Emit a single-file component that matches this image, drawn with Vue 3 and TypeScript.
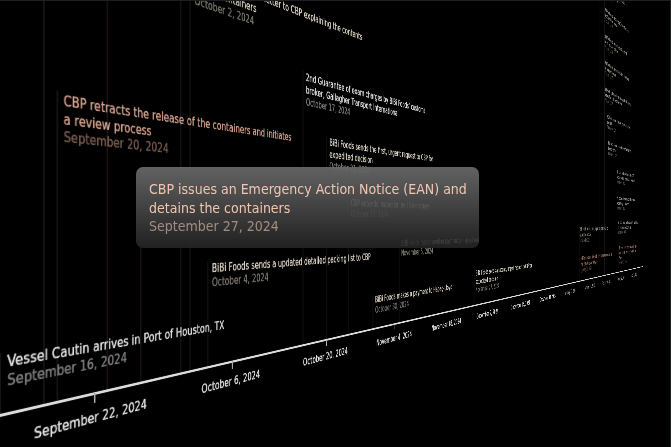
<script setup lang="ts">
type Tone = 'plain' | 'foods' | 'alert'

interface TimelineEvent {
  day: number
  level: number
  tone: Tone
  title: string
  date: string
}

interface Stem {
  day: number
  height: number
  tone: Tone
}

const FIRST_TICK = 104
const DAY_WIDTH = 15

// Days are counted from September 22, 2024; levels are heights above the axis.
const events: TimelineEvent[] = [
  { day: -6, level: 24, tone: 'plain', title: 'Vessel Cautin arrives in Port of Houston, TX', date: 'September 16, 2024' },
  { day: -2, level: 276, tone: 'alert', title: 'CBP retracts the release of the containers and initiates\na review process', date: 'September 20, 2024' },
  { day: 10, level: 474, tone: 'foods', title: 'BiBi Foods sends a letter to CBP explaining the contents\nof the containers', date: 'October 2, 2024' },
  { day: 12, level: 103, tone: 'foods', title: 'BiBi Foods sends a updated detailed packing list to CBP', date: 'October 4, 2024' },
  { day: 25, level: 375, tone: 'plain', title: '2nd Guarantee of exam charges by BiBi Foods’ customs\nbroker, Gallagher Transport International', date: 'October 17, 2024' },
  { day: 29, level: 278, tone: 'foods', title: 'BiBi Foods sends the first, urgent request to CBP for\nexpedited decision', date: 'October 21, 2024' },
  { day: 33, level: 199, tone: 'plain', title: 'CBP extends inspection by 30 more days', date: 'October 25, 2024' },
  { day: 38, level: 24, tone: 'foods', title: 'BiBi Foods makes a payment to Hapag-Lloyd', date: 'October 30, 2024' },
  { day: 44, level: 125, tone: 'foods', title: 'BiBi Foods makes another payment to Hapag-Lloyd', date: 'November 5, 2024' },
  { day: 66, level: 26, tone: 'foods', title: 'BiBi Foods sends a second, urgent request to CBP for\nexpedited decision', date: 'November 27, 2024' },
  { day: 119, level: 125, tone: 'foods', title: 'BiBi Foods sends a third, urgent request to CBP for\nexpedited decision', date: 'January 19, 2025' },
  { day: 120, level: 26, tone: 'alert', title: 'CBP responds to BiBi Foods with the same request as on\nthe 27th August of last year', date: 'January 20, 2025' },
  { day: 139, level: 1036, tone: 'foods', title: 'BiBi Foods sends a letter to the Port Director on\nthe matter of the containers', date: 'February 8, 2025' },
  { day: 139, level: 937, tone: 'foods', title: 'BiBi Foods sends a letter to the Center of Excellence\nand Expertise for review', date: 'February 8, 2025' },
  { day: 139, level: 838, tone: 'foods', title: 'BiBi Foods sends a request to the Office of Trade\nfor the release of containers', date: 'February 8, 2025' },
  { day: 139, level: 740, tone: 'foods', title: 'BiBi Foods sends a request to the Trade Ombudsman\nfor an expedited review', date: 'February 8, 2025' },
  { day: 139, level: 641, tone: 'plain', title: 'BiBi Foods’ customs broker sends a full set of documents\nto the officer in charge of the review', date: 'February 8, 2025' },
  { day: 141, level: 543, tone: 'plain', title: 'BiBi Foods receives an answer from the agriculture\nspecialist', date: 'February 10, 2025' },
  { day: 142, level: 446, tone: 'plain', title: 'BiBi Foods receives a second answer from the Port\nDirector’s office', date: 'February 11, 2025' },
  { day: 150, level: 345, tone: 'foods', title: 'BiBi Foods sends a fourth request to CBP\nfor the expedited decision on all containers', date: 'February 19, 2025' },
  { day: 150, level: 243, tone: 'plain', title: 'The container line informs of further charges\nfor the storage of containers', date: 'February 19, 2025' },
  { day: 151, level: 147, tone: 'foods', title: 'BiBi Foods makes another request for the decision\nand for the release of containers', date: 'February 20, 2025' },
  { day: 152, level: 26, tone: 'alert', title: 'CBP issues a notice of seizure and the agency\nseizes all of the containers held in the port\nof entry', date: 'February 21, 2025' },
]

const stems: Stem[] = [
  { day: -3, height: 900, tone: 'plain' },
  { day: 2, height: 900, tone: 'alert' },
  { day: 5, height: 240, tone: 'alert' },
  { day: 9, height: 900, tone: 'plain' },
  { day: 135, height: 1100, tone: 'plain' },
  { day: 136, height: 1100, tone: 'plain' },
]

const ticks: string[] = [
  'September 22, 2024',
  'October 6, 2024',
  'October 20, 2024',
  'November 4, 2024',
  'November 18, 2024',
  'December 2, 2024',
  'December 16, 2024',
  'December 30, 2024',
  'January 13, 2025',
  'January 27, 2025',
  'February 10, 2025',
  'February 24, 2025',
  'March 10, 2025',
]

const FAR_DAY = 100

const dayLeft = (day: number): string => `${FIRST_TICK + DAY_WIDTH * (day - 1)}px`
const tickLeft = (index: number): string => `${FIRST_TICK + DAY_WIDTH * 14 * index}px`
</script>

<template>
  <main class="scene">
    <div class="plane">
      <span
        v-for="stem in stems"
        :key="stem.day"
        class="stem"
        :class="stem.tone"
        :style="{ left: dayLeft(stem.day), height: `${stem.height}px` }"
      ></span>

      <article
        v-for="event in events"
        :key="event.title"
        class="event"
        :class="[event.tone, { far: event.day > FAR_DAY }]"
        :style="{ left: dayLeft(event.day), paddingBottom: `${event.level}px` }"
      >
        <h2 class="title">{{ event.title }}</h2>
        <time class="date">{{ event.date }}</time>
      </article>

      <div class="axis"></div>
      <div
        v-for="(tick, index) in ticks"
        :key="tick"
        class="tick"
        :class="{ far: index * 14 > FAR_DAY }"
        :style="{ left: tickLeft(index) }"
      >
        <span class="mark"></span>
        <time>{{ tick }}</time>
      </div>
    </div>

    <article class="popup">
      <h2 class="popup-title">CBP issues an Emergency Action Notice (EAN) and detains the containers</h2>
      <time class="popup-date">September 27, 2024</time>
    </article>
  </main>
</template>

<style>
body {
  background: #000;
}
</style>

<style scoped>
.scene {
  position: relative;
  box-sizing: border-box;
  height: 100vh;
  overflow: hidden;
  background: #000;
  border-top: 1px solid #1d2020;
  border-right: 1px solid #1d2020;
  color: #fff;
  font-family: "DejaVu Sans Condensed", "DejaVu Sans", Verdana, sans-serif;
  font-size: 15px;
  perspective: 638px;
  perspective-origin: 50% 50%;
}

h2 {
  margin: 0;
  font-size: inherit;
  font-weight: 400;
}

.plane {
  position: absolute;
  left: 0;
  bottom: 32px;
  width: 2800px;
  height: 0;
  transform-origin: 0 0;
  transform: rotateY(52.3deg);
  text-shadow: 0 0 1px currentColor;
}

.stem,
.event::before {
  position: absolute;
  bottom: 0;
  z-index: -1;
  width: 2px;
  background: #141414;
}

.event::before {
  content: "";
  top: 0;
  left: 0;
}

.stem.alert {
  background: #191211;
}

.event {
  position: absolute;
  bottom: 0;
  padding-left: 8px;
  white-space: pre;
}

.title {
  line-height: 20px;
}

.date {
  display: block;
  line-height: 18px;
  opacity: 0.55;
}

.plain {
  color: #e2e2e2;
}

.foods {
  color: #dcd4c4;
}

.alert {
  color: #d3a28d;
}

.far {
  text-shadow: 0 0 2px currentColor;
}

.far .title,
.far time {
  opacity: 0.65;
}

.far .date {
  opacity: 0.4;
}

.axis {
  position: absolute;
  left: -40px;
  right: 0;
  top: -1px;
  height: 3px;
  background: #dcdcdc;
  box-shadow: 0 0 1px #999;
}

.tick {
  position: absolute;
  top: 0;
  display: flex;
  flex-direction: column;
  align-items: center;
  width: 0;
  line-height: 20px;
  white-space: nowrap;
  color: #e6e6e6;
}

.mark {
  width: 2px;
  height: 11px;
  margin-bottom: 7px;
  background: #aaa;
}

.popup {
  position: absolute;
  left: 136px;
  top: 166px;
  box-sizing: border-box;
  max-width: 343px;
  padding: 13px 12px 13px 13px;
  border-radius: 7px;
  background: linear-gradient(rgba(104, 104, 104, 0.94), rgba(36, 36, 36, 0.9));
  color: #f1c6b1;
  font-size: 14px;
}

.popup-title {
  line-height: 19px;
}

.popup-date {
  display: block;
  line-height: 17px;
  color: #a58c82;
}
</style>
